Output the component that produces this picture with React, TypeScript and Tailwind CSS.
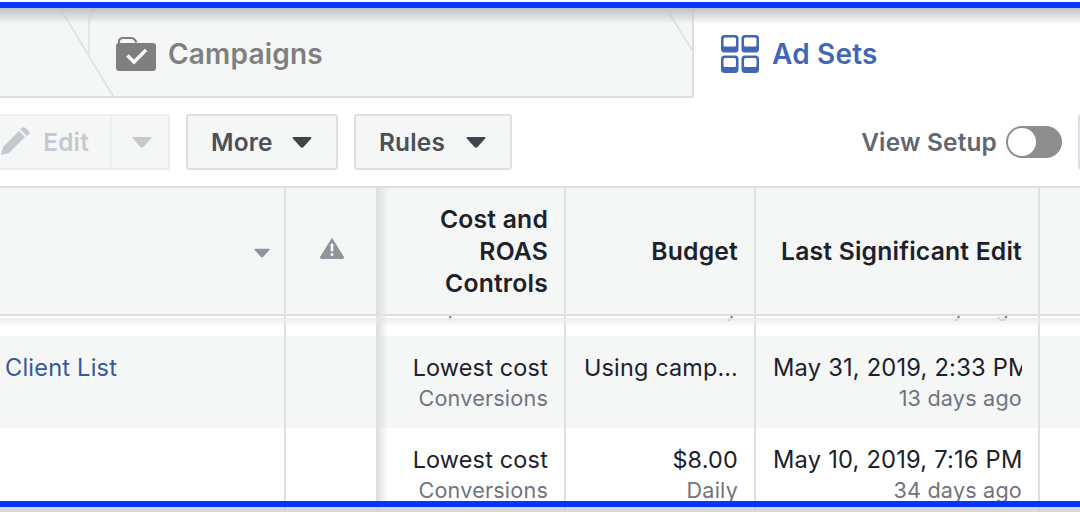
const F = "[font-family:Inter,'Liberation_Sans',sans-serif]";

function Caret({ c, w = 20 }: { c: string; w?: number }) {
  return (
    <svg width={w} height={w * 0.6} viewBox="0 0 20 12" className="shrink-0">
      <path d="M1.5 1h17a1 1 0 0 1 .7 1.6l-7.5 8.2a2.3 2.3 0 0 1-3.4 0L.8 2.600A1 1 0 0 1 1.500 1z" fill={c} />
    </svg>
  );
}

function FolderIcon() {
  return (
    <svg width="40" height="34" viewBox="0 0 40 34" className="shrink-0">
      <path d="M3 7V4.500C3 2 4.500 1 7 1h8c2.500 0 4 1 5.500 4.500" fill="none" stroke="#7f7f7f" strokeWidth="2" />
      <path d="M0 9a3 3 0 0 1 3-3h15l3 0h16a3 3 0 0 1 3 3v22a3 3 0 0 1-3 3H3a3 3 0 0 1-3-3z" fill="#7f7f7f" />
      <path d="M11.500 18.500l6.500 6.500L30 13" fill="none" stroke="#fff" strokeWidth="3.400" />
    </svg>
  );
}

function GridIcon() {
  const cells = [[0, 0], [20.500, 0], [0, 20.500], [20.500, 20.500]];
  return (
    <svg width="38" height="38" viewBox="0 0 38 38" className="shrink-0">
      {cells.map(([x, y]) => (
        <g key={`${x}-${y}`}>
          <rect x={x} y={y} width="17.500" height="17.500" rx="3.500" fill="#4267b2" />
          <rect x={x + 2.500} y={y + 2.500} width="12.500" height="9" rx="1.500" fill="#fff" />
        </g>
      ))}
    </svg>
  );
}

function Pencil() {
  return (
    <svg width="30" height="30" viewBox="0 0 30 30" className="shrink-0">
      <path d="M0 28l2-8L18 4l6 6L8 26z" fill="#c6c8ce" />
      <path d="M19.500 2.500l1.500-1.500a2.500 2.500 0 0 1 3.500 0l3 3a2.500 2.500 0 0 1 0 3.500l-1.500 1.500z" fill="#c6c8ce" />
    </svg>
  );
}

function Warn() {
  return (
    <svg width="24" height="22" viewBox="0 0 24 22">
      <path d="M12 1.500 23.500 20a1 1 0 0 1-1 1.500H1.500a1 1 0 0 1-1-1.500z" fill="#90949c" stroke="#90949c" strokeLinejoin="round" />
      <rect x="10.700" y="6.500" width="2.600" height="8" rx="1.200" fill="#fff" />
      <circle cx="12" cy="17.500" r="1.500" fill="#fff" />
    </svg>
  );
}

function Cell({ main, sub, date }: { main?: string; sub?: string; date?: boolean }) {
  return (
    <>
      {main && (
        <div className={`text-right whitespace-nowrap text-[#1d2129] overflow-hidden ${date ? "text-[23.700px]" : "text-[23.400px]"}`}>{main}</div>
      )}
      {sub && <div className="text-right whitespace-nowrap text-[21.600px] text-[#6f7480]">{sub}</div>}
    </>
  );
}

const grid = "grid grid-cols-[286px_92px_188px_190px_284px_40px]";
const line = "border-r-2 border-[#dddfe2]";

function Row({ bg, height, end, name, col3, col4, col5 }: {
  bg: string; height: string; end?: boolean; name?: string;
  col3: [string, string]; col4: [string, string?]; col5: [string, string];
}) {
  const cell = `${line} pl-[17px] pr-[16px] flex flex-col min-w-0 overflow-hidden ${end ? "justify-end pb-[13px]" : "pt-[17px]"}`;
  return (
    <div className={`${grid} ${bg} ${height} shrink-0 leading-[30px] overflow-hidden`}>
      <div className={`${line} pt-[17px] pl-[5px] text-[23.600px] text-[#365899] whitespace-nowrap`}>{name}</div>
      <div className={line} />
      <div className={cell}><Cell main={col3[0]} sub={col3[1]} /></div>
      <div className={cell}><Cell main={col4[0]} sub={col4[1]} /></div>
      <div className={cell}><Cell main={col5[0]} sub={col5[1]} date /></div>
      <div />
    </div>
  );
}

function Btn({ label, w }: { label: string; w: string }) {
  return (
    <div className={`${w} h-[56px] pl-[23px] pr-[24px] flex items-center justify-between rounded-[3px] border-2 border-[#dddfe2] bg-[#f5f6f6] text-[#4b4f56] font-semibold text-[24.400px]`}>
      {label}
      <Caret c="#41444b" />
    </div>
  );
}

export default function App() {
  return (
    <div className={`${F} relative w-[1080px] h-[512px] overflow-hidden bg-white flex flex-col tracking-[0.2px]`}>
      {/* tabs */}
      <div className="h-[90px] mt-[8px] shrink-0 flex relative">
        <div className="w-[694px] h-[90px] bg-[#f5f6f6] border-b-2 border-r-2 border-[#dddfe2] pl-[116px] pt-[29px] flex items-start gap-[12px]">
          <FolderIcon />
          <span className="text-[#7f7f7f] font-semibold text-[28px] leading-[34px]">Campaigns</span>
        </div>
        <div className="pl-[27px] pt-[27px] flex items-start gap-[13px]">
          <GridIcon />
          <span className="text-[#4267b2] font-semibold text-[28px] leading-[38px]">Ad Sets</span>
        </div>
        <svg width="700" height="90" className="absolute left-0 top-0 pointer-events-none">
          <path d="M60 0 113 88" stroke="#dddfe2" strokeWidth="1.500" fill="none" />
          <path d="M89 47V14Q89 4 96 0" stroke="#dddfe2" strokeWidth="1.500" fill="none" />
          <path d="M666 0 692 42" stroke="#dddfe2" strokeWidth="1.500" fill="none" />
        </svg>
      </div>

      {/* toolbar */}
      <div className="h-[88px] shrink-0 flex items-start relative">
        <div className="ml-[-40px] mt-[16px] h-[56px] w-[210px] flex items-center rounded-[3px] border-2 border-[#eceef0] bg-[#f5f6f6] text-[#c6c8ce] font-semibold text-[24.400px]">
          <div className="w-[150px] h-full flex items-center justify-end gap-[12px] pr-[21px] border-r-2 border-[#eceef0]">
            <Pencil />
            <span>Edit</span>
          </div>
          <div className="flex-1 flex justify-center pl-[3px]"><Caret c="#c6c8ce" /></div>
        </div>
        <div className="mt-[16px] ml-[16px] flex gap-[16px]">
          <Btn label="More" w="w-[152px]" />
          <Btn label="Rules" w="w-[158px]" />
        </div>
        <div className="ml-auto mt-[26px] flex items-center gap-[9px] pr-[18px]">
          <span className="text-[#606770] font-semibold text-[24.400px]">View Setup</span>
          <div className="w-[56px] h-[32px] rounded-full bg-[#8d8d8d] p-[2px]">
            <div className="w-[28px] h-[28px] rounded-full bg-white" />
          </div>
        </div>
        <div className="absolute right-[-4px] top-[16px] w-[6px] h-[56px] rounded-[3px] border-2 border-[#dddfe2] bg-[#f5f6f6]" />
      </div>

      {/* table header */}
      <div className={`${grid} h-[130px] shrink-0 bg-[#f5f6f6] border-y-2 border-[#dddfe2] text-[#1d2129] font-semibold text-[24.700px] leading-[32px]`}>
        <div className={`${line} flex items-center justify-end pr-[14px] pt-[4px]`}><Caret c="#90949c" w={16} /></div>
        <div className={`${line} flex items-center justify-center pb-[6px] pl-[2px]`}><Warn /></div>
        <div className={`${line} flex items-center justify-end text-right pr-[16px]`}>Cost and<br />ROAS<br />Controls</div>
        <div className={`${line} flex items-center justify-end pr-[16px]`}>Budget</div>
        <div className={`${line} flex items-center justify-end pr-[16px] whitespace-nowrap`}>Last Significant Edit</div>
        <div />
      </div>

      {/* rows */}
      <Row bg="bg-white" height="h-[20px]" end col3={["Lowest cost", "Impressions"]} col4={["$8.00", "Daily"]} col5={["May 31, 2019, 2:33 PM", "13 days ago"]} />
      <Row bg="bg-[#f5f6f6]" height="h-[92px]" name="Client List" col3={["Lowest cost", "Conversions"]} col4={["Using camp…"]} col5={["May 31, 2019, 2:33 PM", "13 days ago"]} />
      <Row bg="bg-white" height="h-[92px]" col3={["Lowest cost", "Conversions"]} col4={["$8.00", "Daily"]} col5={["May 10, 2019, 7:16 PM", "34 days ago"]} />

      {/* overlays */}
      <div className="absolute left-0 right-0 top-[8px] h-[16px] bg-gradient-to-b from-[#bfc1c3] to-transparent pointer-events-none" />
      <div className="absolute left-0 right-0 top-[318px] h-[9px] bg-gradient-to-b from-[#e9eaeb] to-transparent pointer-events-none" />
      <div className="absolute left-[378px] top-[188px] bottom-0 w-[10px] bg-gradient-to-r from-[#e0e1e4] to-transparent pointer-events-none" />
      <div className="absolute left-0 right-0 top-[2px] h-[6px] bg-[#0336ff]" />
      <div className="absolute left-0 right-0 top-[501px] h-[6px] bg-[#0336ff]" />
      <div className="absolute left-0 right-0 top-[507px] bottom-0 bg-[#cfd0d2]/80" />
    </div>
  );
}
